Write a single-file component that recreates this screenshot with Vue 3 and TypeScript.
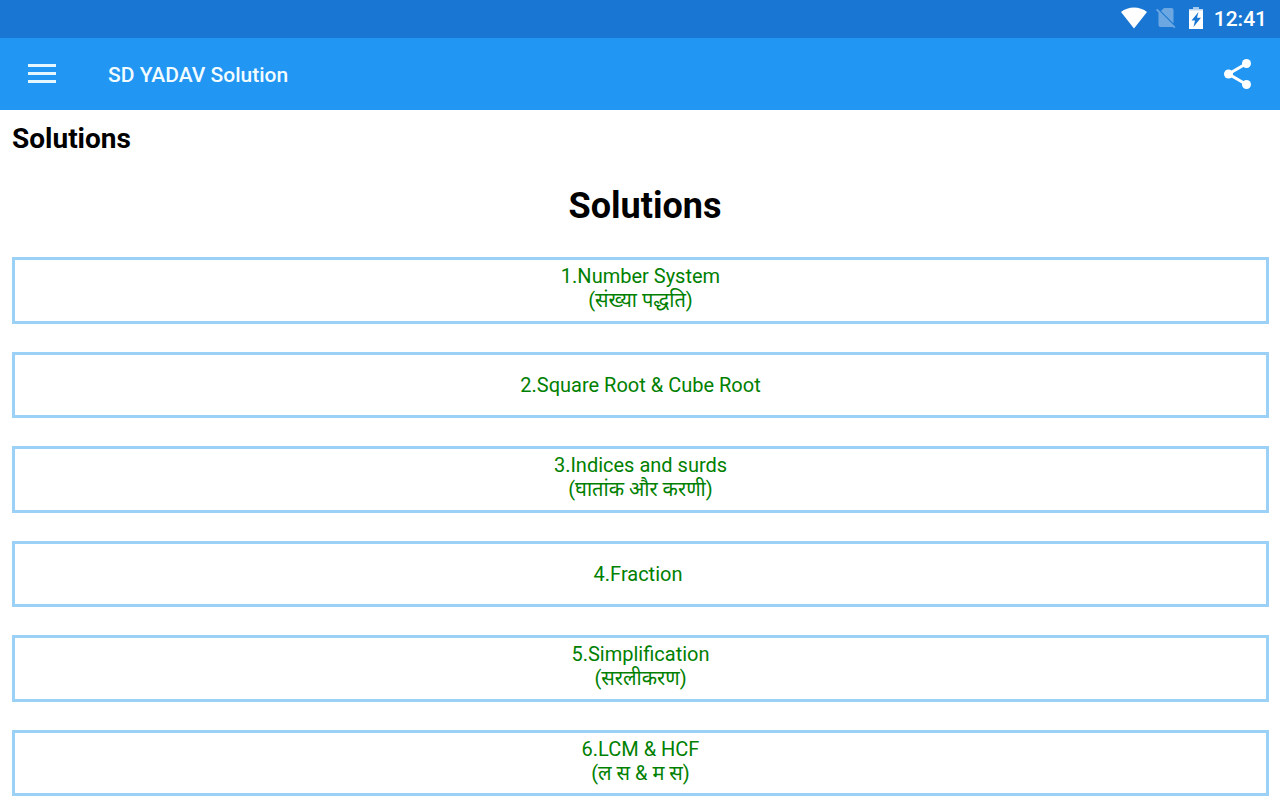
<script setup lang="ts">
interface Chapter {
  title: string
  hindi?: string
}

const chapters: Chapter[] = [
  { title: '1.Number System', hindi: '(संख्या पद्धति)' },
  { title: '2.Square Root & Cube Root' },
  { title: '3.Indices and surds', hindi: '(घातांक और करणी)' },
  { title: '4.Fraction\u00a0' },
  { title: '5.Simplification', hindi: '(सरलीकरण)' },
  { title: '6.LCM & HCF', hindi: '(ल स & म स)' },
]
</script>

<template>
  <div class="screen">
    <div class="status">
      <svg class="wifi" width="26" height="22" viewBox="0 0 26 22" aria-hidden="true">
        <path d="M0 5C7 -1 19 -1 26 5L13 21.500Z" fill="#fff" />
      </svg>
      <svg class="sim" width="20" height="22" viewBox="0 0 20 22" aria-hidden="true">
        <g fill="#fff" opacity=".36">
          <path d="M8 1H15.500Q17.500 1 17.500 3V16.500L5 4Z" />
          <path d="M0 3L1.300 1.700L19.500 20L18.200 21.300L17 20H4.500Q2.500 20 2.500 18V5.500Z" />
        </g>
      </svg>
      <svg class="battery" width="14" height="22" viewBox="0 0 14 22" aria-hidden="true">
        <path d="M4 0H10V2H4Z" fill="#fff" opacity=".6" />
        <path d="M0 2H14V4H0Z" fill="#fff" opacity=".7" />
        <path fill-rule="evenodd" d="M0 3.500H14V22H0ZM9.500 5L2.500 13.500H6L4.500 20L12 10.800H8Z" fill="#fff" />
      </svg>
      <span class="clock">12:41</span>
    </div>

    <header class="bar">
      <button class="icon-button" type="button" aria-label="Menu">
        <svg width="28" height="20" viewBox="0 0 28 20" aria-hidden="true">
          <path d="M0 1.500H28M0 9.500H28M0 17.500H28" stroke="#e4f6ff" stroke-width="3" />
        </svg>
      </button>
      <span class="app-title">SD YADAV Solution</span>
      <button class="icon-button share" type="button" aria-label="Share">
        <svg width="28" height="30" viewBox="0 0 28 30" aria-hidden="true">
          <path d="M22.500 4.500L4.500 15L22.500 25.500" fill="none" stroke="#fff" stroke-width="3" />
          <g fill="#fff">
            <circle cx="22.500" cy="4.500" r="4.500" />
            <circle cx="4.500" cy="15" r="4.500" />
            <circle cx="22.500" cy="25.500" r="4.500" />
          </g>
        </svg>
      </button>
    </header>

    <main class="content">
      <h2 class="page-title">Solutions</h2>
      <h1 class="heading">&nbsp;Solutions</h1>
      <nav class="chapters" aria-label="Chapters">
        <a
          v-for="chapter in chapters"
          :key="chapter.title"
          class="chapter"
          :class="{ bilingual: chapter.hindi }"
          href="#"
          @click.prevent
        >
          <span>{{ chapter.title }}</span>
          <span v-if="chapter.hindi" lang="hi">{{ chapter.hindi }}</span>
        </a>
      </nav>
    </main>
  </div>
</template>

<style>
body {
  margin: 0;
  background: #fff;
}
</style>

<style scoped>
.screen {
  display: flex;
  flex-direction: column;
  min-height: 100vh;
  box-sizing: border-box;
  font-family: Roboto, "Noto Sans", sans-serif;
  color: #000;
}

.status {
  display: flex;
  align-items: flex-end;
  justify-content: flex-end;
  box-sizing: border-box;
  height: 38px;
  padding: 0 13px 9px 0;
  background: #1976d2;
  color: #fff;
}

.sim {
  margin-left: 9px;
}

.battery {
  margin-left: 13px;
}

.clock {
  margin-left: 11px;
  font-size: 21px;
  font-weight: 500;
  line-height: 20px;
}

.bar {
  display: flex;
  align-items: center;
  height: 72px;
  padding: 0 16px;
  background: #2196f3;
}

.icon-button {
  display: flex;
  align-items: center;
  justify-content: center;
  width: 52px;
  height: 52px;
  padding: 0;
  border: 0;
  background: none;
  cursor: pointer;
}

.app-title {
  margin-left: 40px;
  padding-top: 2px;
  color: #f2fcff;
  font-size: 21px;
  font-weight: 500;
  line-height: 24px;
}

.share {
  margin-left: auto;
}

.content {
  flex: 1;
  display: flex;
  flex-direction: column;
  padding: 12px 11px 4px 12px;
}

.page-title {
  margin: 0;
  font-size: 28px;
  font-weight: 700;
  line-height: 33px;
}

.heading {
  margin: 30px 0 29px;
  font-size: 36px;
  font-weight: 700;
  line-height: 43px;
  text-align: center;
}

.chapters {
  flex: 1;
  display: grid;
  grid-auto-rows: 1fr;
  gap: 28px;
}

.chapter {
  display: flex;
  flex-direction: column;
  align-items: center;
  justify-content: center;
  border: 3px solid #9bd1f7;
  color: #008000;
  font-size: 20px;
  line-height: 24px;
  text-decoration: none;
}

.bilingual {
  padding-bottom: 4px;
}
</style>
